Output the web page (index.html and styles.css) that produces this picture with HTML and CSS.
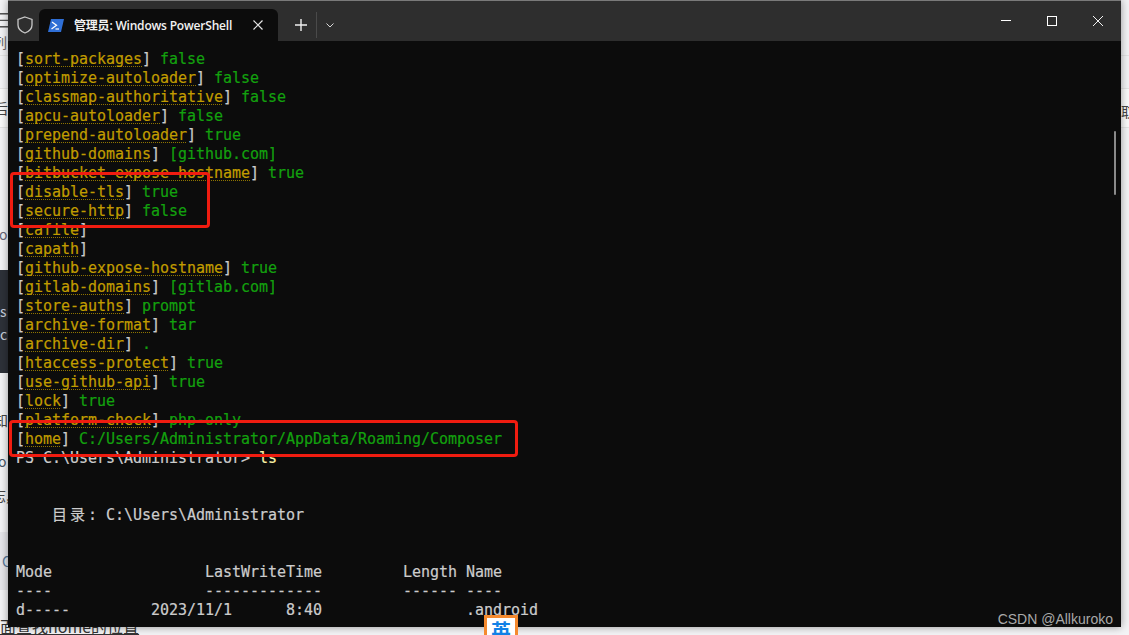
FILE: index.html
```html
<!DOCTYPE html>
<html lang="zh-CN">
<head>
<meta charset="utf-8">
<title>管理员: Windows PowerShell</title>
<link rel="stylesheet" href="styles.css">
</head>
<body>
<div class="bg">
  <span class="frag f1">三</span>
  <span class="frag f2">列</span>
  <span class="band b1"></span>
  <span class="frag f3">后</span>
  <span class="band b2"></span>
  <span class="frag f4">取</span>
  <span class="frag f5">o</span>
  <span class="band b3"></span>
  <span class="band b4"></span>
  <span class="frag f6">s</span>
  <span class="frag f7">c</span>
  <span class="frag f8">知</span>
  <span class="frag f9">o</span>
  <span class="frag f10">志,</span>
  <span class="frag f11">C</span>
  <span class="frag f12">在面查找home的位置</span>
</div>
<div class="window">
  <header class="titlebar">
    <svg class="shield" viewBox="0 0 16 18" width="16" height="18"><path d="M8 1 L15 3.5 V9 C15 13 12 15.5 8 17 C4 15.5 1 13 1 9 V3.5 Z" fill="none" stroke="#c8c8c8" stroke-width="1.3"/></svg>
    <div class="tab">
      <svg class="ps" viewBox="0 0 16 13" width="16" height="13"><path d="M3 0 H16 L13 13 H0 Z" fill="#2f6fd6"/><path d="M4 3 L8.5 6.2 L3.5 10" fill="none" stroke="#fff" stroke-width="1.3"/><path d="M7.5 10 H11" stroke="#fff" stroke-width="1.2"/></svg>
      <span class="tab-title">管理员: Windows PowerShell</span>
      <svg class="tab-x" viewBox="0 0 10 10" width="10" height="10"><path d="M0.5 0.5 L9.5 9.5 M9.5 0.5 L0.5 9.5" stroke="#e6e6e6" stroke-width="1.2"/></svg>
    </div>
    <svg class="plus" viewBox="0 0 12 12" width="12" height="12"><path d="M6 0 V12 M0 6 H12" stroke="#f0f0f0" stroke-width="1.4"/></svg>
    <span class="sep"></span>
    <svg class="chev" viewBox="0 0 8 5" width="8" height="5"><path d="M0.5 0.5 L4 4 L7.5 0.5" fill="none" stroke="#d8d8d8" stroke-width="1"/></svg>
    <div class="controls">
      <svg viewBox="0 0 10 10" width="10" height="10"><path d="M0 4.5 H10" stroke="#fff" stroke-width="1"/></svg>
      <svg viewBox="0 0 10 10" width="10" height="10"><rect x="0.5" y="0.5" width="9" height="9" fill="none" stroke="#fff" stroke-width="1"/></svg>
      <svg viewBox="0 0 10 10" width="10" height="10"><path d="M0 0 L10 10 M10 0 L0 10" stroke="#f2f2f2" stroke-width="1"/></svg>
    </div>
  </header>
  <main class="term">
    <div class="line"><span class="b">[</span><span class="k">sort-packages</span><span class="b">]</span> <span class="v">false</span></div>
    <div class="line"><span class="b">[</span><span class="k">optimize-autoloader</span><span class="b">]</span> <span class="v">false</span></div>
    <div class="line"><span class="b">[</span><span class="k">classmap-authoritative</span><span class="b">]</span> <span class="v">false</span></div>
    <div class="line"><span class="b">[</span><span class="k">apcu-autoloader</span><span class="b">]</span> <span class="v">false</span></div>
    <div class="line"><span class="b">[</span><span class="k">prepend-autoloader</span><span class="b">]</span> <span class="v">true</span></div>
    <div class="line"><span class="b">[</span><span class="k">github-domains</span><span class="b">]</span> <span class="v">[github.com]</span></div>
    <div class="line"><span class="b">[</span><span class="k">bitbucket-expose-hostname</span><span class="b">]</span> <span class="v">true</span></div>
    <div class="line"><span class="b">[</span><span class="k">disable-tls</span><span class="b">]</span> <span class="v">true</span></div>
    <div class="line"><span class="b">[</span><span class="k">secure-http</span><span class="b">]</span> <span class="v">false</span></div>
    <div class="line"><span class="b">[</span><span class="k">cafile</span><span class="b">]</span></div>
    <div class="line"><span class="b">[</span><span class="k">capath</span><span class="b">]</span></div>
    <div class="line"><span class="b">[</span><span class="k">github-expose-hostname</span><span class="b">]</span> <span class="v">true</span></div>
    <div class="line"><span class="b">[</span><span class="k">gitlab-domains</span><span class="b">]</span> <span class="v">[gitlab.com]</span></div>
    <div class="line"><span class="b">[</span><span class="k">store-auths</span><span class="b">]</span> <span class="v">prompt</span></div>
    <div class="line"><span class="b">[</span><span class="k">archive-format</span><span class="b">]</span> <span class="v">tar</span></div>
    <div class="line"><span class="b">[</span><span class="k">archive-dir</span><span class="b">]</span> <span class="v">.</span></div>
    <div class="line"><span class="b">[</span><span class="k">htaccess-protect</span><span class="b">]</span> <span class="v">true</span></div>
    <div class="line"><span class="b">[</span><span class="k">use-github-api</span><span class="b">]</span> <span class="v">true</span></div>
    <div class="line"><span class="b">[</span><span class="k">lock</span><span class="b">]</span> <span class="v">true</span></div>
    <div class="line"><span class="b">[</span><span class="k">platform-check</span><span class="b">]</span> <span class="v">php-only</span></div>
    <div class="line"><span class="b">[</span><span class="k">home</span><span class="b">]</span> <span class="v">C:/Users/Administrator/AppData/Roaming/Composer</span></div>
    <div class="line">PS C:\Users\Administrator&gt; <span class="cmd">ls</span></div>
    <div class="line"> </div>
    <div class="line"> </div>
    <div class="line">    <span class="cjk">目录</span>: C:\Users\Administrator</div>
    <div class="line"> </div>
    <div class="line"> </div>
    <div class="line">Mode                 LastWriteTime         Length Name</div>
    <div class="line">----                 -------------         ------ ----</div>
    <div class="line">d-----         2023/11/1      8:40                .android</div>
  </main>
  <span class="thumb"></span>
  <span class="mark m1"></span>
  <span class="mark m2"></span>
  <span class="watermark">CSDN @Allkuroko</span>
</div>
<span class="ime">英</span>
</body>
</html>
```

FILE: styles.css
```css
* { box-sizing: border-box; }
html, body { margin: 0; padding: 0; }
body {
  width: 1129px;
  height: 635px;
  overflow: hidden;
  position: relative;
  background: #f3f3f5;
  padding: 0 8px;
}
.bg { position: absolute; inset: 0; font-family: "Noto Sans CJK SC", sans-serif; font-size: 14px; color: #444; overflow: hidden; }
.frag { position: absolute; line-height: 16px; white-space: nowrap; }
.band { position: absolute; left: 0; right: 0; }
.f1 { left: -4px; top: 11px; font-size: 18px; color: #555; }
.f2 { left: -7px; top: 34px; color: #666; }
.f3 { left: -6px; top: 100px; }
.f4 { left: 1121px; top: 103px; }
.f5 { left: -1px; top: 226px; color: #667; }
.f6 { left: 0; top: 303px; color: #c8d0dc; }
.f7 { left: 0; top: 326px; color: #c8d0dc; }
.f8 { left: -6px; top: 412px; }
.f9 { left: -2px; top: 453px; color: #456; }
.f10 { left: -8px; top: 487px; }
.f11 { left: 2px; top: 553px; color: #579; }
.f12 { left: -16px; top: 618px; font-size: 16px; text-decoration: underline; color: #333; }
.b1 { top: 88px; height: 40px; background: #fafafa; border-top: 1px solid #e4e4e4; border-bottom: 1px solid #e4e4e4; }
.b2 { top: 55px; height: 0; border-top: 1px solid #e4e4e4; }
.b3 { top: 270px; height: 103px; right: auto; width: 8px; background: #2d3139; }
.b4 { top: 532px; height: 58px; right: auto; width: 8px; background: #e6e6ea; }
.ime {
  position: absolute;
  left: 484px;
  top: 615px;
  width: 34px;
  height: 26px;
  background: #fff;
  border: 3px solid #f58a2e;
  color: #1281e6;
  font-family: "Noto Sans CJK SC", sans-serif;
  font-size: 20px;
  font-weight: 700;
  line-height: 26px;
  text-align: center;
}
.window {
  position: relative;
  width: 1113px;
  height: 627px;
  background: #0c0c0c;
  display: flex;
  flex-direction: column;
  box-shadow: 0 0 8px rgba(0,0,0,.4);
  border-top: 1px solid #7a7a7a;
  overflow: hidden;
}
.titlebar {
  height: 40px;
  flex: none;
  background: #2e2e2e;
  display: flex;
  align-items: center;
  padding: 8px 0 0 9px;
}
.shield { flex: none; }
.tab {
  margin-left: 6px;
  align-self: flex-end;
  width: 239px;
  height: 32px;
  background: #0c0c0c;
  border-radius: 6px 6px 0 0;
  display: flex;
  align-items: center;
  padding-left: 9px;
  color: #f2f2f2;
}
.tab-title { margin-left: 10px; width: 179px; white-space: nowrap; font-family: "Open Sans", "Noto Sans CJK SC", sans-serif; font-size: 12px; font-weight: 600; letter-spacing: -0.2px; }
.tab-x { flex: none; }
.plus { margin-left: 17px; flex: none; }
.sep { width: 1px; height: 26px; background: #4a4a4a; margin-left: 9px; flex: none; }
.chev { margin-left: 9px; flex: none; }
.controls { margin-left: auto; margin-top: -8px; display: flex; align-items: center; }
.controls svg { flex: none; margin-right: 36px; }
.controls svg:last-child { margin-right: 18px; }
.term {
  flex: 1;
  padding: 9px 0 0 8px;
  font-family: "DejaVu Sans Mono", monospace;
  font-size: 15px;
  letter-spacing: -0.03px;
  line-height: 19px;
  color: #cccccc;
  -webkit-text-stroke: 0.2px;
}
.line { height: 19px; white-space: pre; }
.b { color: #cccccc; }
.k {
  color: #c19c00;
  text-decoration: underline dotted #8f7400 1px;
  text-underline-offset: 2px;
  text-decoration-skip-ink: none;
}
.v { color: #13a10e; }
.cmd { color: #f9f1a5; }
.cjk { font-family: "Noto Sans CJK SC", sans-serif; font-size: 15px; letter-spacing: 3px; line-height: 0; }
.thumb { position: absolute; right: 5px; top: 130px; width: 2px; height: 64px; background: #8a8a8a; border-radius: 1px; }
.mark { position: absolute; border: 3px solid #f01c10; border-radius: 4px; }
.m1 { left: 2px; top: 171px; width: 200px; height: 56px; }
.m2 { left: 1px; top: 419px; width: 509px; height: 37px; }
.watermark {
  position: absolute;
  right: 8px;
  bottom: -1px;
  font-family: "Liberation Sans", sans-serif;
  font-size: 14px;
  line-height: 18px;
  color: #a9a9a9;
}
```
